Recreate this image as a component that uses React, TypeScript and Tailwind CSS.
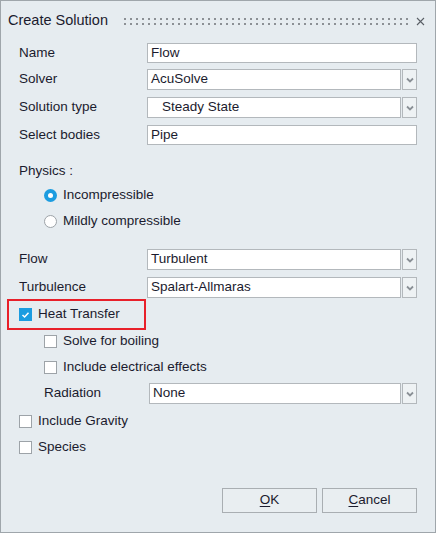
import React from 'react';

const font = "font-['Liberation_Sans',Arial,sans-serif]";

function Chevron() {
  return (
    <svg width="8" height="6" viewBox="0 0 8 6" className="block">
      <path d="M1 1.5 L4 4.5 L7 1.5" fill="none" stroke="#8a9096" strokeWidth="1.8" />
    </svg>
  );
}

function TextBox({ value, indent = false }: { value: string; indent?: boolean }) {
  return (
    <div
      className={`h-full flex-1 bg-white border border-[#b3b8bc] flex items-center ${indent ? 'pl-[14px]' : 'pl-[3px]'} text-[13.5px] text-[#1b1b2e]`}
    >
      {value}
    </div>
  );
}

function Select({ value, indent = false }: { value: string; indent?: boolean }) {
  return (
    <div className="h-full flex-1 flex">
      <TextBox value={value} indent={indent} />
      <div className="w-[15px] h-full bg-[#eef2f4] border border-[#b3b8bc] flex items-center justify-center ml-[1px]">
        <Chevron />
      </div>
    </div>
  );
}

function Row({ label, children, labelW = 'w-[128px]', className = '' }: { label: string; children: React.ReactNode; labelW?: string; className?: string }) {
  return (
    <div className={`flex items-center ${className}`}>
      <div className={`${labelW} shrink-0 text-[13.5px] text-[#1b1b2e]`}>{label}</div>
      {children}
    </div>
  );
}

function Check({ checked = false, label }: { checked?: boolean; label: string }) {
  return (
    <div className="flex items-center h-[20px]">
      {checked ? (
        <div className="w-[13px] h-[13px] bg-[#1c9ce0] flex items-center justify-center">
          <svg width="9" height="8" viewBox="0 0 9 8">
            <path d="M1.5 4 L3.6 6 L7.5 1.8" fill="none" stroke="white" strokeWidth="1.5" />
          </svg>
        </div>
      ) : (
        <div className="w-[13px] h-[13px] bg-white border border-[#9da3a8]" />
      )}
      <span className="ml-[6px] text-[13.5px] text-[#1b1b2e]">{label}</span>
    </div>
  );
}

function Radio({ checked = false, label }: { checked?: boolean; label: string }) {
  return (
    <div className="flex items-center h-[20px]">
      {checked ? (
        <div className="w-[13px] h-[13px] rounded-full bg-[#1c9ce0] flex items-center justify-center">
          <div className="w-[5px] h-[5px] rounded-full bg-white" />
        </div>
      ) : (
        <div className="w-[13px] h-[13px] rounded-full bg-white border border-[#9da3a8]" />
      )}
      <span className="ml-[6px] text-[13.5px] text-[#1b1b2e]">{label}</span>
    </div>
  );
}

function Button({ hot, rest }: { hot: string; rest: string }) {
  return (
    <div className="w-[95px] h-[25px] border border-[#a9aeb2] bg-[#e9eef1] flex items-center justify-center text-[13.5px] text-[#1b1b2e]">
      <span className="underline underline-offset-2">{hot}</span>
      {rest}
    </div>
  );
}

export default function App() {
  return (
    <div className={`w-[436px] h-[533px] bg-[#e6ecf0] border border-[#9fa6ab] ${font} flex flex-col`}>
      <div className="h-[40px] flex items-center pl-[7px] pr-[10px]">
        <span className="text-[14.5px] text-[#1b1b2e]">Create Solution</span>
        <svg className="ml-[16px]" width="286" height="7" viewBox="0 0 286 7">
          <defs>
            <pattern id="grip" width="6" height="7" patternUnits="userSpaceOnUse">
              <rect x="0" y="0" width="2" height="2" fill="#8c9095" />
              <rect x="0" y="5" width="2" height="2" fill="#8c9095" />
            </pattern>
          </defs>
          <rect width="286" height="7" fill="url(#grip)" />
        </svg>
        <svg className="ml-auto" width="9" height="9" viewBox="0 0 9 9">
          <path d="M1 1 L8 8 M8 1 L1 8" stroke="#5a5f66" strokeWidth="1.1" />
        </svg>
      </div>

      <div className="flex flex-col pl-[18px] pr-[18px]">
        <Row label="Name" className="h-[20px] mt-[2px]">
          <TextBox value="Flow" />
        </Row>
        <Row label="Solver" className="h-[21px] mt-[6px]">
          <Select value="AcuSolve" />
        </Row>
        <Row label="Solution type" className="h-[21px] mt-[7px]">
          <Select value="Steady State" indent />
        </Row>
        <Row label="Select bodies" className="h-[20px] mt-[7px]">
          <TextBox value="Pipe" />
        </Row>

        <div className="h-[20px] mt-[16px] flex items-center text-[13.5px] text-[#1b1b2e]">Physics :</div>
        <div className="pl-[25px] mt-[4px]">
          <Radio checked label="Incompressible" />
        </div>
        <div className="pl-[25px] mt-[6px]">
          <Radio label="Mildly compressible" />
        </div>

        <Row label="Flow" className="h-[21px] mt-[18px]">
          <Select value="Turbulent" />
        </Row>
        <Row label="Turbulence" className="h-[21px] mt-[7px]">
          <Select value="Spalart-Allmaras" />
        </Row>

        <div className="-ml-[12px] mt-[1px] w-[139px] h-[31px] border-2 border-[#e8202a] flex items-center pl-[10px]">
          <Check checked label="Heat Transfer" />
        </div>

        <div className="pl-[25px] mt-[1px]">
          <Check label="Solve for boiling" />
        </div>
        <div className="pl-[25px] mt-[6px]">
          <Check label="Include electrical effects" />
        </div>
        <div className="pl-[25px]">
          <Row label="Radiation" labelW="w-[105px]" className="h-[21px] mt-[6px]">
            <Select value="None" />
          </Row>
        </div>

        <div className="mt-[7px]">
          <Check label="Include Gravity" />
        </div>
        <div className="mt-[6px]">
          <Check label="Species" />
        </div>

        <div className="flex justify-end gap-[5px] mt-[31px]">
          <Button hot="O" rest="K" />
          <Button hot="C" rest="ancel" />
        </div>
      </div>
    </div>
  );
}
